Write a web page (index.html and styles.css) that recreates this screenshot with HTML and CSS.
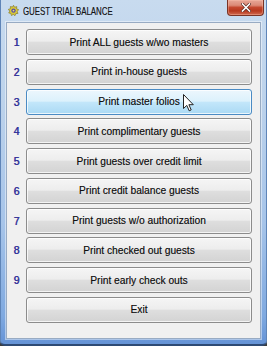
FILE: index.html
```html
<!DOCTYPE html>
<html>
<head>
<meta charset="utf-8">
<link rel="stylesheet" href="styles.css">
</head>
<body>
<div class="window">
  <div class="titlebar">
    <svg class="app-icon" width="11" height="11" viewBox="0 0 11 11">
      <path d="M5.5 0.3 L6.6 2.2 L8.8 1.6 L8.6 3.8 L10.7 4.8 L9.1 6.3 L10 8.4 L7.8 8.6 L7 10.7 L5.3 9.4 L3.4 10.6 L2.9 8.4 L0.7 8 L1.8 6.1 L0.3 4.4 L2.4 3.7 L2.4 1.5 L4.5 2 Z" fill="#d9c93a" stroke="#7a6b1e" stroke-width="0.6"/>
      <circle cx="5.5" cy="5.6" r="2.2" fill="#5a4fa6"/>
      <circle cx="5.5" cy="5.6" r="0.9" fill="#e8e070"/>
    </svg>
    <span class="title">GUEST TRIAL BALANCE</span>
    <div class="close">
      <svg width="10" height="9" viewBox="0 0 10 9">
        <path d="M1.5 1 L8.5 8 M8.5 1 L1.5 8" stroke="#5a2a22" stroke-width="3" stroke-linecap="square"/>
        <path d="M1.5 1 L8.5 8 M8.5 1 L1.5 8" stroke="#ffffff" stroke-width="1.6" stroke-linecap="square"/>
      </svg>
    </div>
  </div>
  <div class="client">
    <div class="row"><span class="num">1</span><button class="btn">Print ALL guests w/wo masters</button></div>
    <div class="row"><span class="num">2</span><button class="btn">Print in-house guests</button></div>
    <div class="row"><span class="num">3</span><button class="btn hover">Print master folios</button></div>
    <div class="row"><span class="num">4</span><button class="btn">Print complimentary guests</button></div>
    <div class="row"><span class="num">5</span><button class="btn">Print guests over credit limit</button></div>
    <div class="row"><span class="num">6</span><button class="btn">Print credit balance guests</button></div>
    <div class="row"><span class="num">7</span><button class="btn">Print guests w/o authorization</button></div>
    <div class="row"><span class="num">8</span><button class="btn">Print checked out guests</button></div>
    <div class="row"><span class="num">9</span><button class="btn">Print early check outs</button></div>
    <div class="row"><span class="num"></span><button class="btn">Exit</button></div>
  </div>
  <svg class="cursor" width="12" height="18" viewBox="0 0 12 18">
    <path d="M0.5 0.5 L0.5 14.5 L3.8 11.4 L6.2 16.8 L8.2 15.9 L5.9 10.7 L10.3 10.7 Z" fill="#ffffff" stroke="#222222" stroke-width="1" stroke-linejoin="round"/>
  </svg>
</div>
</body>
</html>
```
FILE: styles.css
```css
html, body {
  margin: 0;
  padding: 0;
}
body {
  width: 267px;
  height: 346px;
  overflow: hidden;
  background: #3c3c3c;
}
.window {
  position: relative;
  box-sizing: border-box;
  width: 267px;
  height: 346px;
  display: flex;
  flex-direction: column;
  padding: 0 5px 5px 5px;
  border: 1px solid #5f85b8;
  border-top: none;
  border-bottom: 2px solid #2e4a74;
  border-radius: 0 0 5px 5px;
  background: linear-gradient(#c8dbef 0%, #bcd2eb 30%, #a6c4e9 65%, #7fa9e0 92%, #6593d6 100%);
  font-family: "Liberation Sans", Arial, sans-serif;
}
.titlebar {
  height: 22px;
  flex: none;
  display: flex;
  align-items: center;
}
.app-icon {
  margin-left: 2px;
  margin-top: -1px;
  flex: none;
}
.title {
  margin-left: 4px;
  font-family: "Liberation Sans", Arial, sans-serif;
  font-size: 10.2px;
  color: #151515;
  text-shadow: 0.2px 0 0 rgba(0, 0, 0, 0.35);
  transform: scaleX(0.77);
  transform-origin: left center;
  white-space: nowrap;
}
.close {
  margin-left: auto;
  margin-right: -3px;
  align-self: flex-start;
  box-sizing: border-box;
  width: 37px;
  height: 16px;
  border: 1px solid #7a3426;
  border-top: none;
  border-radius: 0 0 4px 4px;
  background: linear-gradient(#e7a797 0%, #dc8b78 35%, #c4482f 50%, #b7391f 72%, #d06a50 100%);
  box-shadow: inset 0 0 0 1px rgba(255, 200, 180, 0.35);
  display: flex;
  align-items: center;
  justify-content: center;
}
.client {
  flex: 1;
  background: #f0f0f0;
  border: 1px solid #98abc3;
  box-shadow: 0 0 0 1px rgba(255, 255, 255, 0.45);
  padding: 6px 8px 0 0;
  display: flex;
  flex-direction: column;
  gap: 3.75px;
}
.row {
  display: grid;
  grid-template-columns: 19px 1fr;
  align-items: center;
}
.num {
  text-align: center;
  font-size: 10.5px;
  color: #34349a;
  text-shadow: 0.3px 0 0 #34349a;
}
.btn {
  box-sizing: border-box;
  height: 26px;
  margin: 0;
  padding: 0;
  border: 1px solid #8c8c8c;
  border-radius: 3px;
  background: linear-gradient(#f5f5f5 0%, #ededed 46%, #dedede 52%, #d3d3d3 100%);
  box-shadow: inset 0 0 0 1px rgba(255, 255, 255, 0.75);
  font-family: "Liberation Sans", Arial, sans-serif;
  font-size: 10.2px;
  color: #111111;
  text-shadow: 0.15px 0 0 rgba(0, 0, 0, 0.4);
  text-align: center;
}
.btn.hover {
  border-color: #4b8bc4;
  background: linear-gradient(#ecf7fd 0%, #dcf1fc 46%, #c2e6fa 52%, #aad9f4 100%);
}
.cursor {
  position: absolute;
  left: 182px;
  top: 94px;
}
```
